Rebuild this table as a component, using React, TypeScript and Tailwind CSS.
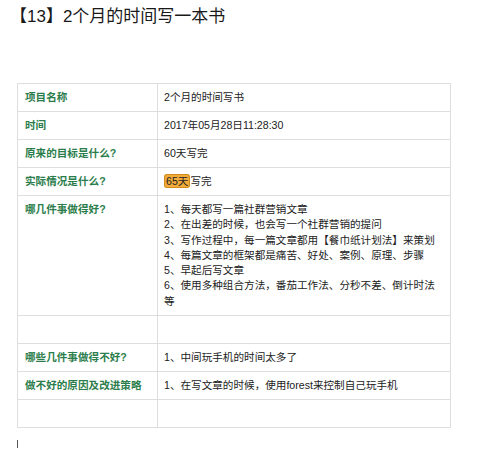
import React from "react";

const rows: { label: string; value: React.ReactNode; tall?: boolean }[] = [
  { label: "项目名称", value: "2个月的时间写书" },
  { label: "时间", value: "2017年05月28日11:28:30" },
  { label: "原来的目标是什么?", value: "60天写完" },
  {
    label: "实际情况是什么?",
    value: (
      <>
        <span className="rounded-[3px] border border-[#d18b1c] bg-[#f3ac3c] px-px">65天</span>
        写完
      </>
    ),
  },
  {
    label: "哪几件事做得好?",
    tall: true,
    value: (
      <div className="leading-[15.3px]">
        <div>1、每天都写一篇社群营销文章</div>
        <div>2、在出差的时候，也会写一个社群营销的提问</div>
        <div>3、写作过程中，每一篇文章都用【餐巾纸计划法】来策划</div>
        <div>4、每篇文章的框架都是痛苦、好处、案例、原理、步骤</div>
        <div>5、早起后写文章</div>
        <div>6、使用多种组合方法，番茄工作法、分秒不差、倒计时法等</div>
      </div>
    ),
  },
  { label: "", value: "" },
  { label: "哪些几件事做得不好?", value: "1、中间玩手机的时间太多了" },
  { label: "做不好的原因及改进策略", value: "1、在写文章的时候，使用forest来控制自己玩手机" },
  { label: "", value: "" },
];

export default function App() {
  return (
    <div
      className="w-[499px] h-[450px] bg-white text-[#222] overflow-hidden"
      style={{ fontFamily: '"Liberation Sans", "Noto Sans CJK SC", sans-serif' }}
    >
      <h1 className="pl-[10px] pt-[5px] text-[17px] leading-[24px] font-normal text-[#1a1a1a]">
        【13】2个月的时间写一本书
      </h1>
      <table className="ml-[17px] mt-[54px] w-[434px] border-collapse table-fixed text-[10.6px]">
        <colgroup>
          <col className="w-[140px]" />
          <col />
        </colgroup>
        <tbody>
          {rows.map((r, i) => (
            <tr key={i}>
              <td
                className={`border border-[#dedede] pl-[7px] font-bold text-[#2c7d4c] ${
                  r.tall ? "align-top pt-[6px] pb-[6px]" : "h-[28px] align-middle"
                }`}
              >
                {r.label}
              </td>
              <td
                className={`border border-[#dedede] pl-[6px] pr-[8px] ${
                  r.tall ? "align-top pt-[6px] pb-[6px]" : "h-[28px] align-middle"
                }`}
              >
                {r.value}
              </td>
            </tr>
          ))}
        </tbody>
      </table>
      <div className="ml-[17px] mt-[12px] w-px h-[8px] bg-[#555]" />
    </div>
  );
}
